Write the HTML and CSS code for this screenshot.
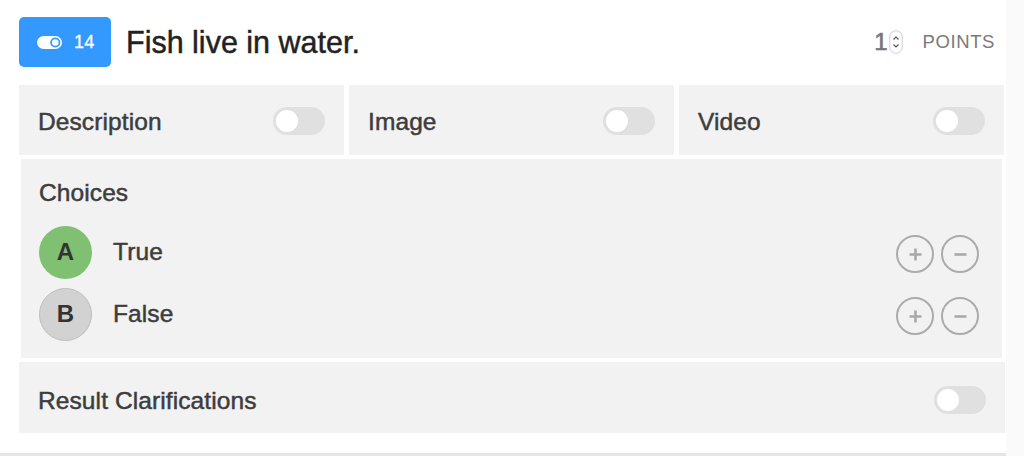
FILE: index.html
```html
<!DOCTYPE html>
<html>
<head>
<meta charset="utf-8">
<link rel="stylesheet" href="styles.css">
</head>
<body>
<div class="card">
  <div class="header">
    <div class="badge">
      <svg class="badge-icon" width="25" height="13" viewBox="0 0 25 13">
        <rect x="0" y="0" width="25" height="13" rx="6.5" fill="#fff"/>
        <circle cx="18.3" cy="6.5" r="4.2" fill="#fff" stroke="#3399ff" stroke-width="1.8"/>
      </svg>
      <span class="badge-num">14</span>
    </div>
    <h1 class="title">Fish live in water.</h1>
    <div class="points">
      <span class="points-num">1</span>
      <span class="spinner">
        <svg width="14" height="24" viewBox="0 0 14 24">
          <rect x="0.75" y="0.75" width="12.5" height="22.5" rx="6" fill="#fff" stroke="#cfcfcf" stroke-width="1"/>
          <path d="M4.5 9.5 L7 7 L9.5 9.5" fill="none" stroke="#555" stroke-width="1.2"/>
          <path d="M4.5 14.5 L7 17 L9.5 14.5" fill="none" stroke="#555" stroke-width="1.2"/>
        </svg>
      </span>
      <span class="points-label">POINTS</span>
    </div>
  </div>

  <div class="media-row">
    <div class="panel">
      <span class="label">Description</span>
      <span class="toggle"><span class="knob"></span></span>
    </div>
    <div class="panel">
      <span class="label">Image</span>
      <span class="toggle"><span class="knob"></span></span>
    </div>
    <div class="panel">
      <span class="label">Video</span>
      <span class="toggle"><span class="knob"></span></span>
    </div>
  </div>

  <div class="choices">
    <div class="label choices-title">Choices</div>
    <div class="choice">
      <span class="letter letter-a">A</span>
      <span class="label choice-text">True</span>
      <span class="actions">
        <span class="round-btn">
          <svg width="13" height="13" viewBox="0 0 13 13"><path d="M6.5 0.5 V12.5 M0.5 6.5 H12.5" stroke="#a9a9a9" stroke-width="2.6"/></svg>
        </span>
        <span class="round-btn">
          <svg width="13" height="13" viewBox="0 0 13 13"><path d="M0.5 6.5 H12.5" stroke="#a9a9a9" stroke-width="2.6"/></svg>
        </span>
      </span>
    </div>
    <div class="choice">
      <span class="letter letter-b">B</span>
      <span class="label choice-text">False</span>
      <span class="actions">
        <span class="round-btn">
          <svg width="13" height="13" viewBox="0 0 13 13"><path d="M6.5 0.5 V12.5 M0.5 6.5 H12.5" stroke="#a9a9a9" stroke-width="2.6"/></svg>
        </span>
        <span class="round-btn">
          <svg width="13" height="13" viewBox="0 0 13 13"><path d="M0.5 6.5 H12.5" stroke="#a9a9a9" stroke-width="2.6"/></svg>
        </span>
      </span>
    </div>
  </div>

  <div class="panel result">
    <span class="label">Result Clarifications</span>
    <span class="toggle"><span class="knob"></span></span>
  </div>
</div>
</body>
</html>
```

FILE: styles.css
```css
* { box-sizing: border-box; }

html, body {
  margin: 0;
  padding: 0;
  background: #fafafa;
  font-family: "Liberation Sans", Arial, sans-serif;
}

.card {
  width: 1006px;
  height: 456px;
  background: #fff;
  border-bottom: 3px solid #e6e6e6;
  padding: 17px 1px 0 19px;
  display: flex;
  flex-direction: column;
}

.header {
  display: flex;
  align-items: center;
  height: 50px;
  margin-bottom: 18px;
}

.badge {
  width: 92px;
  height: 50px;
  background: #3399ff;
  border-radius: 5px;
  display: flex;
  align-items: center;
  padding-left: 18px;
  color: #fff;
}

.badge-icon { display: block; }

.badge-num {
  margin-left: 12px;
  font-size: 18px;
  letter-spacing: 0.3px;
  -webkit-text-stroke: 0.3px #fff;
}

.title {
  margin: 0 0 0 15px;
  font-size: 30.5px;
  font-weight: normal;
  color: #222;
  -webkit-text-stroke: 0.45px #222;
  flex: 1;
}

.points {
  display: flex;
  align-items: center;
  margin-right: 10px;
}

.points-num {
  font-size: 24px;
  color: #777;
  -webkit-text-stroke: 0.6px #777;
  margin-right: 1px;
}

.spinner { display: flex; }
.spinner svg { display: block; }

.points-label {
  margin-left: 20px;
  font-size: 18.5px;
  color: #7a7a7a;
  letter-spacing: 0.6px;
}

.media-row {
  display: grid;
  grid-template-columns: repeat(3, 325px);
  gap: 5px;
  margin-bottom: 4px;
}

.panel {
  background: #f2f2f2;
  height: 70px;
  display: flex;
  align-items: center;
  justify-content: space-between;
  padding: 4px 19px 0 19px;
}

.label {
  font-size: 24.5px;
  letter-spacing: 0.1px;
  color: #3d3d3d;
  -webkit-text-stroke: 0.5px #3d3d3d;
}

.toggle {
  width: 52px;
  height: 28px;
  border-radius: 14px;
  background: #e0e0e0;
  padding: 3px;
  display: flex;
}

.panel .toggle { margin-top: -2px; }

.knob {
  width: 22px;
  height: 22px;
  border-radius: 50%;
  background: #fff;
}

.choices {
  background: #f2f2f2;
  margin: 0 3px 4px 2px;
  height: 199px;
  padding: 20px 23px 0 18px;
}

.choices-title {
  line-height: 28px;
  margin-bottom: 19px;
}

.choice {
  display: flex;
  align-items: center;
  height: 52px;
  margin-bottom: 10px;
}

.letter {
  width: 53px;
  height: 53px;
  border-radius: 50%;
  display: flex;
  align-items: center;
  justify-content: center;
  font-size: 24px;
  font-weight: bold;
  color: #333;
}

.letter-a { background: #80c073; }
.letter-b { background: #d2d2d2; border: 1px solid #bebebe; }

.choice-text {
  margin-left: 21px;
  flex: 1;
}

.actions {
  display: flex;
  gap: 7px;
  margin-top: 4px;
}

.round-btn {
  width: 38px;
  height: 38px;
  border-radius: 50%;
  border: 2.5px solid #ababab;
  display: flex;
  align-items: center;
  justify-content: center;
}

.round-btn svg { display: block; }

.result {
  height: 71px;
  padding-top: 6px;
}
```
